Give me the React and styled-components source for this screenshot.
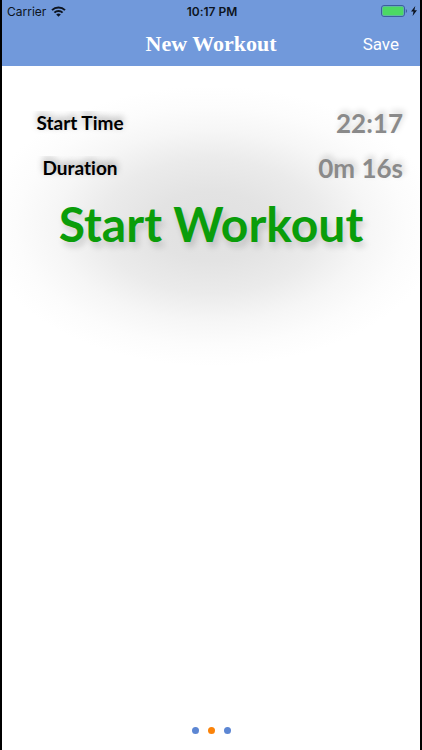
import { useState } from "react";
import styled, { createGlobalStyle } from "styled-components";

const GlobalStyle = createGlobalStyle`
  * {
    box-sizing: border-box;
  }
  body {
    margin: 0;
    background: #000;
  }
  button {
    padding: 0;
    border: 0;
    background: none;
    cursor: pointer;
  }
`;

const Screen = styled.div`
  min-height: 100vh;
  margin: 0 2px;
  display: flex;
  flex-direction: column;
  background: #fff;
  font-family: Lato, sans-serif;
  font-variant-ligatures: none;
`;

const Header = styled.header`
  background: #7199db;
  font-family: Inter, sans-serif;
`;

const StatusBar = styled.div`
  height: 22px;
  padding: 0 3px 0 5px;
  display: grid;
  grid-template-columns: 1fr auto 1fr;
  align-items: center;
  font-size: 12px;
  color: #0d1420;
`;

const StatusGroup = styled.div`
  display: flex;
  align-items: center;
  justify-content: ${(props) => props.$align || "flex-start"};
  gap: ${(props) => props.$gap || 0}px;
`;

const Clock = styled.span`
  font-weight: 600;
`;

const NavBar = styled.nav`
  height: 44px;
  padding: 0 21px;
  display: grid;
  grid-template-columns: 1fr auto 1fr;
  align-items: center;
  color: #fff;
`;

const Title = styled.h1`
  grid-column: 2;
  margin: 0;
  font-family: "Liberation Serif", serif;
  font-size: 22px;
  line-height: 24px;
  font-weight: 700;
`;

const SaveButton = styled.button`
  justify-self: end;
  font-family: Roboto, sans-serif;
  font-size: 17px;
  line-height: 24px;
  color: #fff;
`;

const Content = styled.main`
  flex: 1;
  display: flex;
  flex-direction: column;
  background: radial-gradient(
    ellipse 230px 140px at 50% 160px,
    #e0e0e0 0%,
    #e3e3e3 25%,
    #ebebeb 48%,
    #f6f6f6 68%,
    #fcfcfc 85%,
    #fff 100%
  );
`;

const Details = styled.dl`
  margin: 0;
  padding: 34px 17px 0 28px;
`;

const Row = styled.div`
  height: 45px;
  display: flex;
  align-items: center;
  justify-content: space-between;
`;

const Label = styled.dt`
  width: 100px;
  height: 24px;
  overflow: hidden;
  text-align: center;
  font-size: 19px;
  line-height: 24px;
  font-weight: 700;
  color: #000;
  text-shadow: 0 -3px 7px rgba(0, 0, 0, 0.4);
`;

const Value = styled.dd`
  margin: 0;
  font-size: 26px;
  line-height: 32px;
  font-weight: 700;
  color: #8a8a8a;
  text-shadow: 2px -3px 6px rgba(0, 0, 0, 0.2);
`;

const StartButton = styled.button`
  align-self: center;
  margin-top: 2px;
  font-family: Lato, sans-serif;
  font-variant-ligatures: none;
  font-size: 48px;
  line-height: 64px;
  font-weight: 700;
  color: #0a9d0a;
  text-shadow: 3px 5px 6px rgba(0, 0, 0, 0.15);
`;

const Pager = styled.footer`
  margin-top: auto;
  height: 40px;
  display: flex;
  align-items: center;
  justify-content: center;
  gap: 9px;
`;

const Dot = styled.button`
  width: 7px;
  height: 7px;
  border-radius: 50%;
  background: ${(props) => (props.$active ? "#fb8309" : "#5c86d3")};
`;

const WifiIcon = () => (
  <svg width="15" height="11" viewBox="0 0 15 11" fill="none" stroke="#0d1420" strokeWidth="2">
    <path d="M1 4.1a9.3 9.3 0 0 1 13 0" />
    <path d="M3.4 6.6a5.9 5.9 0 0 1 8.2 0" />
    <path d="M7.5 10.8 5.2 8.5a3.3 3.3 0 0 1 4.6 0z" fill="#0d1420" stroke="none" />
  </svg>
);

const BatteryIcon = () => (
  <svg width="27" height="12" viewBox="0 0 27 12">
    <rect x="0.5" y="0.5" width="23" height="11" rx="2.5" fill="none" stroke="#3d5f9e" />
    <rect x="1.5" y="1.5" width="21" height="9" rx="1.5" fill="#4cd964" />
    <path d="M24.8 4v4a2.2 2.2 0 0 0 0-4z" fill="#3d5f9e" />
  </svg>
);

const BoltIcon = () => (
  <svg width="6" height="10" viewBox="0 0 6 10">
    <path d="M4.3 0 0 5.6h2.5L1.6 10 6 4.2H3.4z" fill="#0d1420" />
  </svg>
);

const details = [
  { label: "Start Time", value: "22:17" },
  { label: "Duration", value: "0m 16s" },
];

const pages = ["History", "New Workout", "Settings"];

const App = () => {
  const [page, setPage] = useState(1);

  return (
    <>
      <GlobalStyle />
      <Screen>
        <Header>
          <StatusBar>
            <StatusGroup $gap={5}>
              <span>Carrier</span>
              <WifiIcon />
            </StatusGroup>
            <Clock>10:17 PM</Clock>
            <StatusGroup $align="flex-end" $gap={3}>
              <BatteryIcon />
              <BoltIcon />
            </StatusGroup>
          </StatusBar>
          <NavBar>
            <Title>New Workout</Title>
            <SaveButton type="button">Save</SaveButton>
          </NavBar>
        </Header>
        <Content>
          <Details>
            {details.map((item) => (
              <Row key={item.label}>
                <Label>{item.label}</Label>
                <Value>{item.value}</Value>
              </Row>
            ))}
          </Details>
          <StartButton type="button">Start Workout</StartButton>
          <Pager>
            {pages.map((name, i) => (
              <Dot
                key={name}
                type="button"
                aria-label={name}
                $active={i === page}
                onClick={() => setPage(i)}
              />
            ))}
          </Pager>
        </Content>
      </Screen>
    </>
  );
};

export default App;
